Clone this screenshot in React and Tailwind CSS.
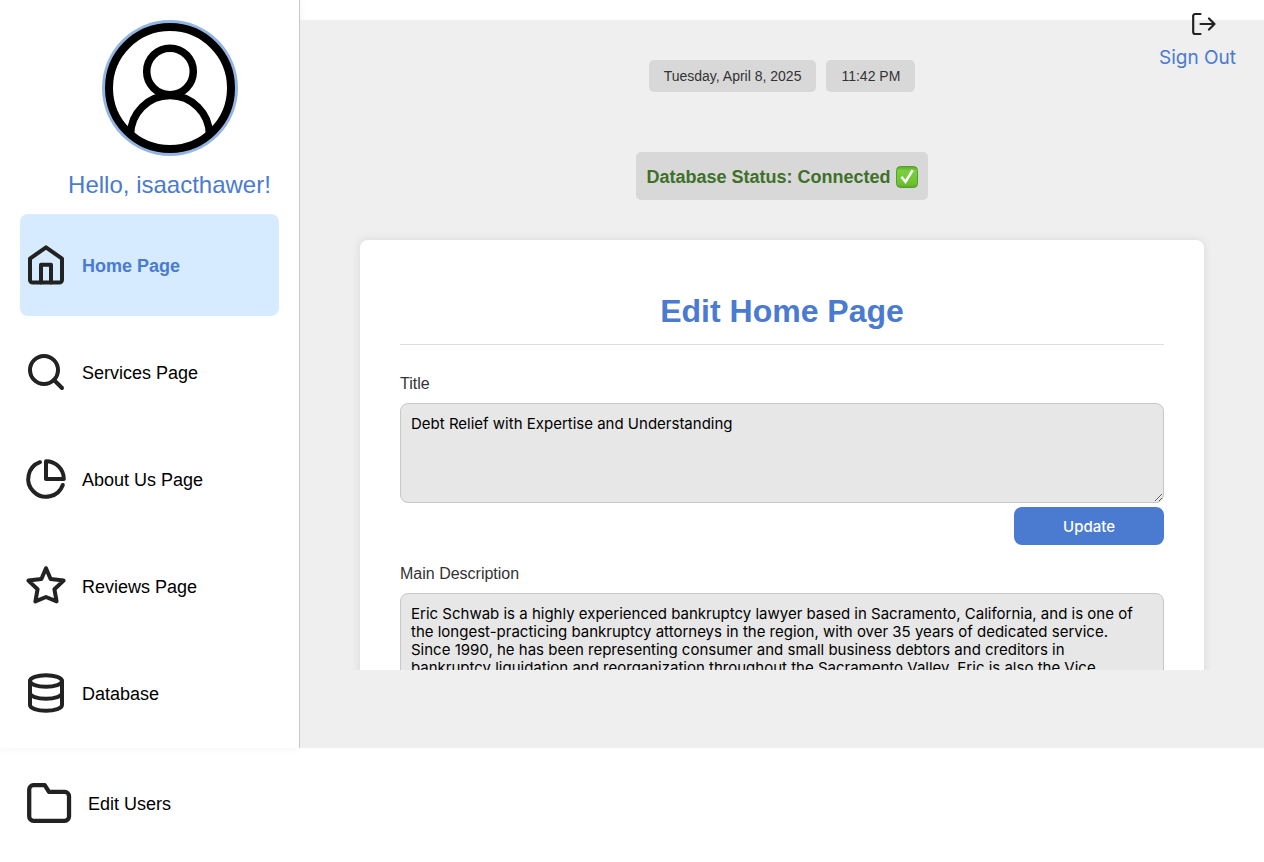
import { useState } from "react";

const stroke = {
  fill: "none",
  stroke: "#222222",
  strokeWidth: 2,
  strokeLinecap: "round",
  strokeLinejoin: "round",
  "aria-hidden": true,
};

function HomeIcon() {
  return (
    <svg viewBox="0 0 24 24" className="size-12 shrink-0" {...stroke}>
      <path d="M4 8.800l8-5.600 8 5.600v10.700a1.300 1.300 0 0 1-1.300 1.300H5.300A1.300 1.300 0 0 1 4 19.500z" />
      <path d="M9.500 20.800v-8.900h5v8.900" />
    </svg>
  );
}

function SearchIcon() {
  return (
    <svg viewBox="0 0 24 24" className="size-12 shrink-0" {...stroke}>
      <circle cx="11" cy="11" r="7" />
      <path d="M20 20l-4-4" />
    </svg>
  );
}

function PieIcon() {
  return (
    <svg viewBox="0 0 24 24" className="size-12 shrink-0" {...stroke}>
      <path d="M9 3.600A8.900 8.900 0 1 0 20.400 15" />
      <path d="M12 3.100a8.900 8.900 0 0 1 8.900 8.900H12z" />
    </svg>
  );
}

function StarIcon() {
  return (
    <svg viewBox="0 0 24 24" className="size-12 shrink-0" {...stroke}>
      <path d="M12 3.100l2.300 5.400 6.500.8-4.600 4.300 1.100 6.100-5.300-2.200-5.300 2.200 1.100-6.100-4.600-4.300 6.500-.8z" />
    </svg>
  );
}

function DatabaseIcon() {
  return (
    <svg viewBox="0 0 24 24" className="size-12 shrink-0" {...stroke}>
      <ellipse cx="12" cy="6" rx="8" ry="2.900" />
      <path d="M4 6v12c0 1.600 3.580 2.900 8 2.900s8-1.300 8-2.900V6" />
      <path d="M4 12c0 1.600 3.580 2.900 8 2.900s8-1.300 8-2.900" />
    </svg>
  );
}

function FolderIcon() {
  return (
    <svg viewBox="0 0 24 24" className="size-[54px] shrink-0" {...stroke} strokeWidth={1.9}>
      <path d="M3.200 6a1.900 1.900 0 0 1 1.900-1.900h5l1.900 3h7a1.900 1.900 0 0 1 1.900 1.900v9a1.900 1.900 0 0 1-1.900 1.900H5.100A1.900 1.900 0 0 1 3.200 18z" />
    </svg>
  );
}

function SignOutIcon() {
  return (
    <svg viewBox="0 0 36 28" className="h-7 w-9" {...stroke} strokeWidth={2.2}>
      <path d="M20.500 4h-5.300a2 2 0 0 0-2 2v16a2 2 0 0 0 2 2h5.300" />
      <path d="M20.500 14h14M29 8.500l5.500 5.500-5.500 5.500" />
    </svg>
  );
}

function Avatar() {
  return (
    <svg viewBox="0 0 136 136" className="size-[136px]" role="img" aria-label="User avatar">
      <defs>
        <clipPath id="avatar-face">
          <circle cx="68" cy="68" r="62" />
        </clipPath>
      </defs>
      <circle cx="68" cy="68" r="68" fill="#93b5e1" />
      <circle cx="68" cy="68" r="61" fill="#ffffff" stroke="#000000" strokeWidth="8" />
      <g fill="none" stroke="#000000" strokeWidth="7.500" clipPath="url(#avatar-face)">
        <circle cx="68" cy="51.500" r="23.300" />
        <path d="M28.500 118v-3a39.500 39.500 0 0 1 79 0v3" />
      </g>
    </svg>
  );
}

function CheckIcon() {
  return (
    <svg viewBox="0 0 22 22" className="size-[22px] shrink-0" role="img" aria-label="Connected">
      <defs>
        <linearGradient id="check-fill" x1="0" y1="0" x2="0" y2="1">
          <stop offset="0" stopColor="#58a82c" />
          <stop offset="0.200" stopColor="#79d13f" />
          <stop offset="0.850" stopColor="#6cc030" />
          <stop offset="1" stopColor="#5aa62a" />
        </linearGradient>
      </defs>
      <rect x="0.500" y="0.500" width="21" height="21" rx="4" fill="url(#check-fill)" stroke="#559f2b" />
      <path d="M4.500 11.500l2-1.500 2.800 3.800 6.300-10.300 2.200 1.200-8.200 13.300z" fill="#ffffff" />
    </svg>
  );
}

const pages = [
  { name: "Home Page", Icon: HomeIcon },
  { name: "Services Page", Icon: SearchIcon },
  { name: "About Us Page", Icon: PieIcon },
  { name: "Reviews Page", Icon: StarIcon },
  { name: "Database", Icon: DatabaseIcon },
];

function Field({ id, label, initial, boxClass }) {
  const [value, setValue] = useState(initial);
  return (
    <div className="flex flex-col">
      <label htmlFor={id} className="mb-[9px] text-base leading-5 text-[#333333]">
        {label}
      </label>
      <textarea
        id={id}
        value={value}
        onChange={(e) => setValue(e.target.value)}
        className={`w-full resize overflow-hidden rounded-lg border border-[#c8c8c8] bg-[#e7e7e7] pt-[11px] pr-4 pb-2 pl-2.5 font-['Inter',sans-serif] text-[15px] leading-[18px] text-black ${boxClass}`}
      />
      <button
        type="button"
        className="mt-1 h-[38px] w-[150px] self-end rounded-lg bg-[#4a7bd0] pt-0.5 font-['Inter',sans-serif] text-[15px] font-medium text-white"
      >
        Update
      </button>
    </div>
  );
}

export default function App() {
  return (
    <div className="relative min-h-screen bg-white font-['Liberation_Sans',Arial,sans-serif] text-black">
      <div className="grid grid-cols-[300px_minmax(0,1fr)]">
        <aside className="border-r border-[#c8c8c8] bg-white px-5 pt-5 pb-1 shadow-[0_0_10px_rgba(0,0,0,0.05)]">
          <div className="flex flex-col items-center pl-10">
            <Avatar />
            <p className="mt-3 mb-3 text-2xl leading-[34px] whitespace-nowrap text-[#4a7bd0]">
              Hello, isaacthawer!
            </p>
          </div>
          <nav className="flex flex-col gap-[5px]">
            {pages.map(({ name, Icon }, i) => (
              <a
                key={name}
                href="#"
                aria-current={i === 0 ? "page" : undefined}
                className={`flex h-[102px] items-center gap-3 rounded-lg px-0.5 text-lg ${
                  i === 0 ? "bg-[#d6ebff] font-bold text-[#4a7bd0]" : ""
                }`}
              >
                <Icon />
                <span className="pt-0.5">{name}</span>
              </a>
            ))}
          </nav>
        </aside>

        <main className="mt-5 flex flex-col items-center bg-[#efefef] pt-10 pb-[78px]">
          <div className="flex gap-2.5 text-sm text-[#333333]">
            <span className="flex h-8 items-center rounded-[5px] bg-[#d8d8d8] px-[15px]">Tuesday, April 8, 2025</span>
            <span className="flex h-8 items-center rounded-[5px] bg-[#d8d8d8] px-[15px]">11:42 PM</span>
          </div>
          <div className="mt-[60px] flex h-12 items-center gap-[5px] rounded-[5px] bg-[#d8d8d8] px-2.5 pt-0.5 text-lg font-bold text-[#3f702a]">
            Database Status: Connected
            <CheckIcon />
          </div>

          <div className="mt-5 min-h-0 w-full flex-1 basis-0 overflow-y-auto px-[60px] pt-5 [scrollbar-width:none]">
            <section className="rounded-lg bg-white px-10 pt-[51px] pb-10 shadow-[0_0_10px_rgba(0,0,0,0.1)]">
              <h1 className="border-b border-[#dddddd] pb-[13px] text-center text-[32px] leading-10 font-bold text-[#4a7bd0]">
                Edit Home Page
              </h1>
              <form className="mt-[29px] flex flex-col gap-[19px]" onSubmit={(e) => e.preventDefault()}>
                <Field
                  id="home-title"
                  label="Title"
                  initial="Debt Relief with Expertise and Understanding"
                  boxClass="h-[100px]"
                />
                <Field
                  id="home-description"
                  label="Main Description"
                  initial="Eric Schwab is a highly experienced bankruptcy lawyer based in Sacramento, California, and is one of the longest-practicing bankruptcy attorneys in the region, with over 35 years of dedicated service. Since 1990, he has been representing consumer and small business debtors and creditors in bankruptcy liquidation and reorganization throughout the Sacramento Valley. Eric is also the Vice"
                  boxClass="h-[200px]"
                />
              </form>
            </section>
          </div>
        </main>
      </div>

      <a href="#" className="flex items-center gap-3 px-[22px] py-7 text-lg">
        <FolderIcon />
        <span className="pt-0.5">Edit Users</span>
      </a>

      <a
        href="#"
        className="absolute top-2.5 right-7 flex flex-col items-center gap-[7px] font-['Inter',sans-serif] text-[19px] leading-[26px] text-[#4a7bd0]"
      >
        <SignOutIcon />
        Sign Out
      </a>
    </div>
  );
}
